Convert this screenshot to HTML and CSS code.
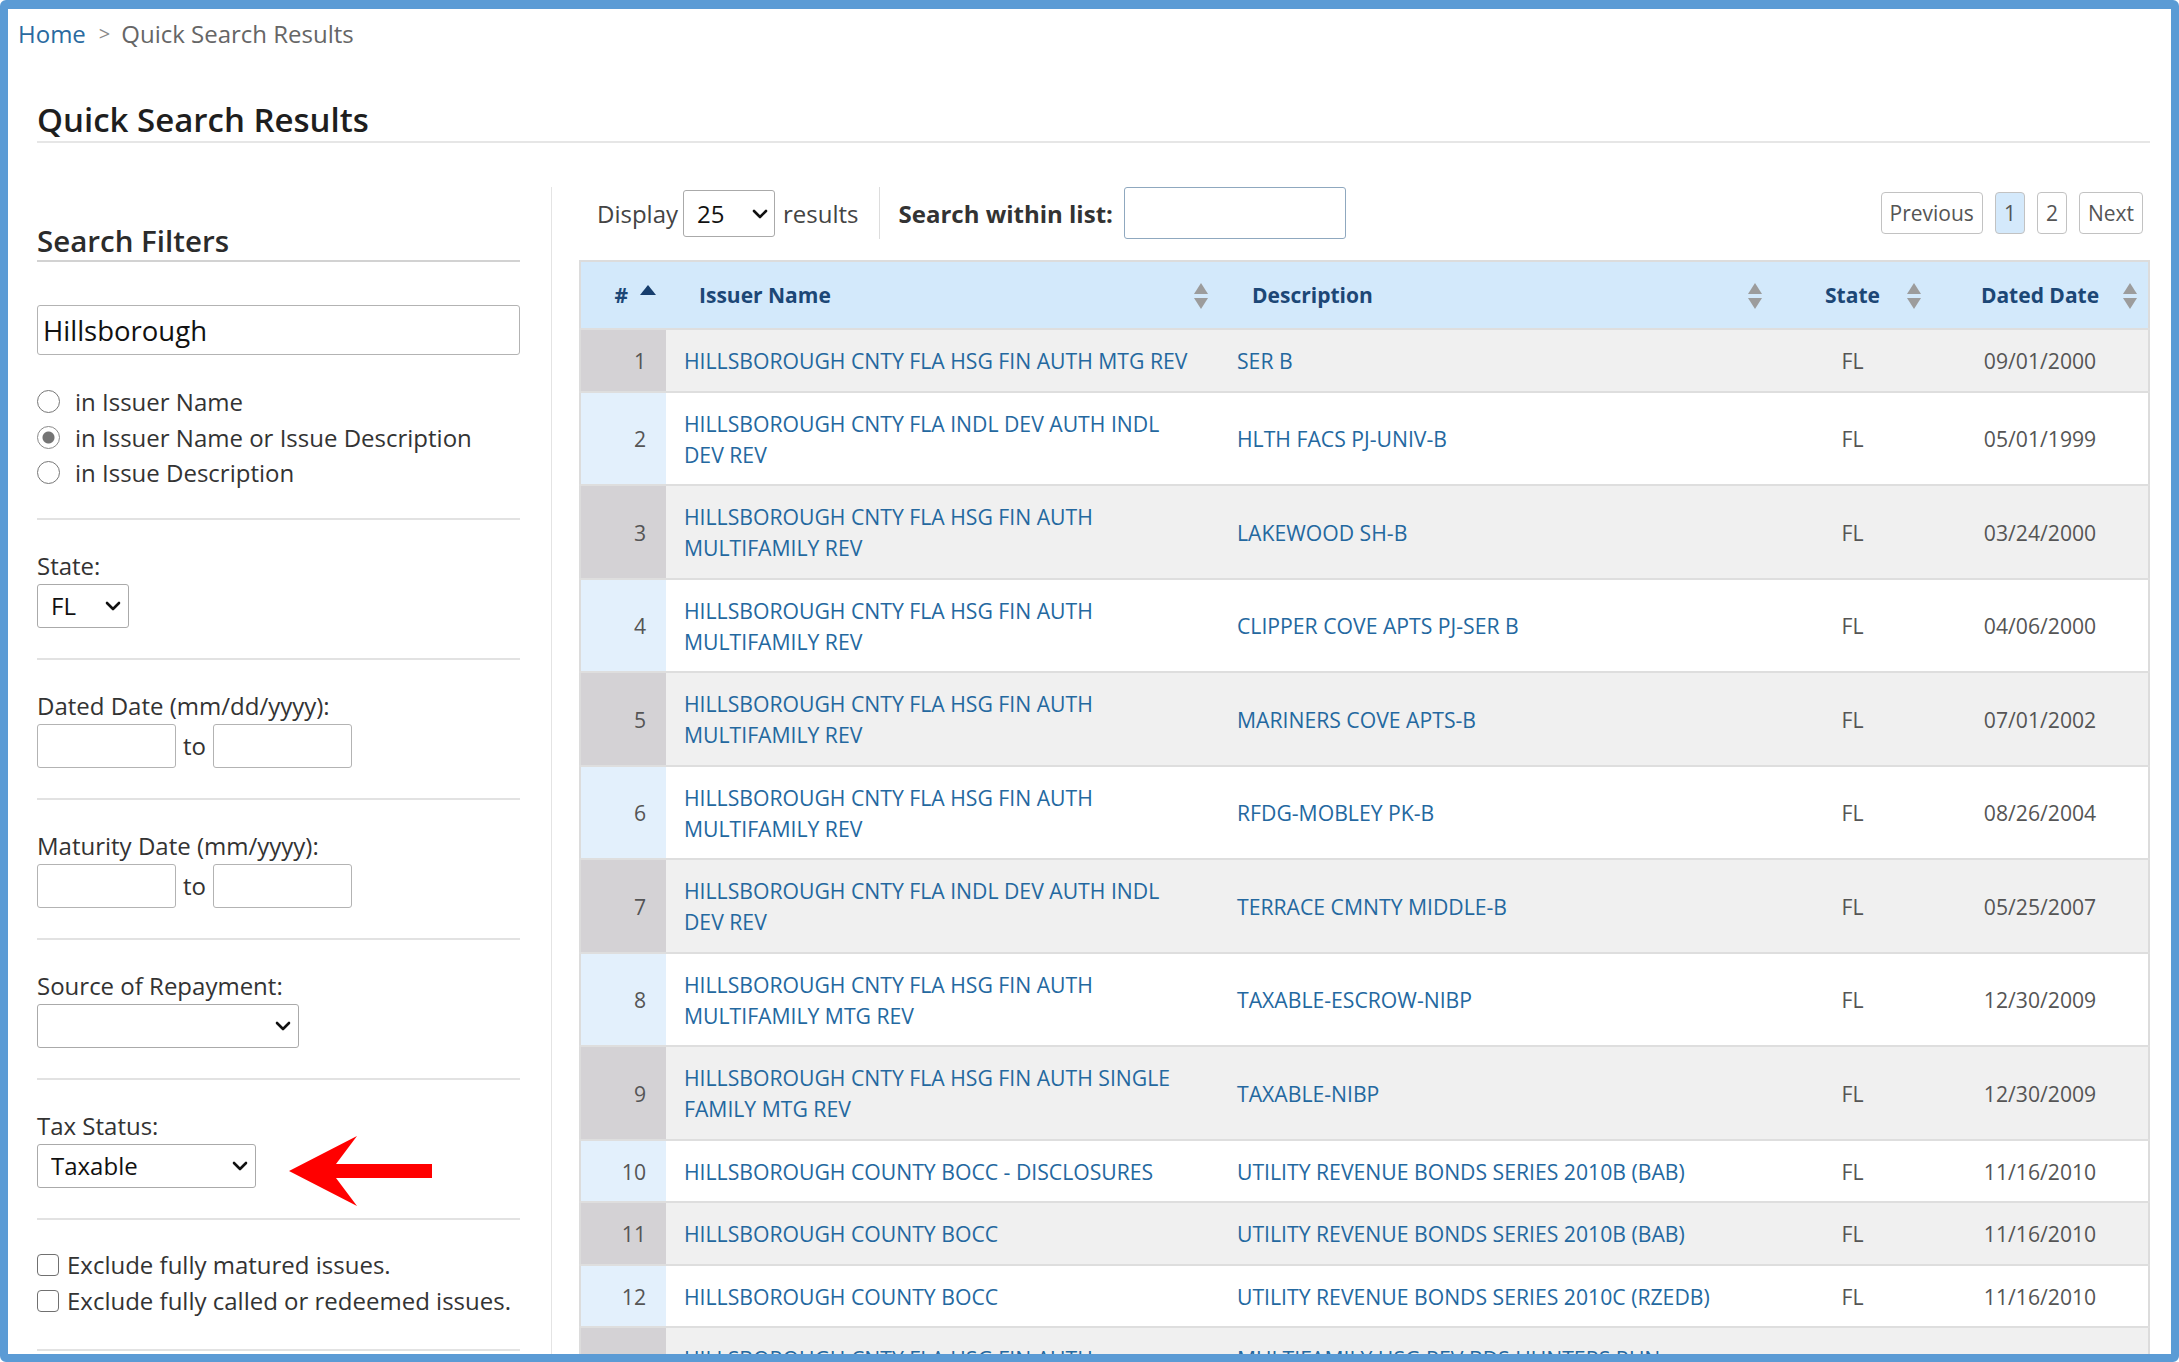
FILE: index.html
```html
<!DOCTYPE html>
<html lang="en">
<head>
<meta charset="utf-8">
<title>Quick Search Results</title>
<link rel="stylesheet" href="styles.css">
</head>
<body>
<div class="frame">
  <nav class="crumbs"><a class="crumb-link" href="#">Home</a><span class="crumb-sep">&gt;</span><span class="crumb-current">Quick Search Results</span></nav>
  <main class="page">
    <h1 class="title">Quick Search Results</h1>
    <div class="layout">
      <aside class="sidebar">
        <h2 class="side-title">Search Filters</h2>
        <div class="group group-first">
          <input class="text-input big" type="text" value="Hillsborough">
          <div class="radios">
            <label class="radio-line"><input type="radio" name="scope" class="radio"><span>in Issuer Name</span></label>
            <label class="radio-line"><input type="radio" name="scope" class="radio" checked><span>in Issuer Name or Issue Description</span></label>
            <label class="radio-line"><input type="radio" name="scope" class="radio"><span>in Issue Description</span></label>
          </div>
        </div>
        <div class="group">
          <label class="field-label">State:</label>
          <div class="sel sel-state"><select class="select"><option>FL</option></select><svg class="chev" viewBox="0 0 16 10" width="16" height="10"><polyline points="2,2 8,8 14,2"/></svg></div>
        </div>
        <div class="group">
          <label class="field-label">Dated Date (mm/dd/yyyy):</label>
          <div class="range"><input class="text-input date" type="text"><span class="to">to</span><input class="text-input date" type="text"></div>
        </div>
        <div class="group">
          <label class="field-label">Maturity Date (mm/yyyy):</label>
          <div class="range"><input class="text-input date" type="text"><span class="to">to</span><input class="text-input date" type="text"></div>
        </div>
        <div class="group">
          <label class="field-label">Source of Repayment:</label>
          <div class="sel sel-source"><select class="select"><option></option></select><svg class="chev" viewBox="0 0 16 10" width="16" height="10"><polyline points="2,2 8,8 14,2"/></svg></div>
        </div>
        <div class="group">
          <label class="field-label">Tax Status:</label>
          <div class="tax-row">
            <div class="sel sel-tax"><select class="select"><option>Taxable</option></select><svg class="chev" viewBox="0 0 16 10" width="16" height="10"><polyline points="2,2 8,8 14,2"/></svg></div>
            <svg class="arrow" viewBox="0 0 143 70" width="143" height="70"><polygon points="0,35 68,0 47,28 143,28 143,42 47,42 68,70"/></svg>
          </div>
        </div>
        <div class="group group-checks">
          <label class="check-line"><input type="checkbox" class="check"><span>Exclude fully matured issues.</span></label>
          <label class="check-line"><input type="checkbox" class="check"><span>Exclude fully called or redeemed issues.</span></label>
        </div>
        <div class="group"></div>
      </aside>
      <section class="results">
        <div class="toolbar">
          <span class="tb-text">Display</span>
          <div class="sel sel-count"><select class="select"><option>25</option></select><svg class="chev" viewBox="0 0 16 10" width="16" height="10"><polyline points="2,2 8,8 14,2"/></svg></div>
          <span class="tb-text">results</span>
          <span class="tb-sep"></span>
          <label class="tb-label">Search within list:</label>
          <input class="text-input within" type="text">
          <div class="pager">
            <span class="pg-btn">Previous</span>
            <span class="pg-btn pg-active">1</span>
            <span class="pg-btn">2</span>
            <span class="pg-btn">Next</span>
          </div>
        </div>
        <table class="grid">
          <colgroup>
            <col class="c-num"><col class="c-name"><col class="c-desc"><col class="c-state"><col class="c-date">
          </colgroup>
          <thead>
            <tr>
              <th class="th-num">#<svg class="asc" viewBox="0 0 16 10" width="16" height="10"><polygon points="8,0 16,10 0,10"/></svg></th>
              <th class="th-left">Issuer Name<svg class="sort" viewBox="0 0 14 26" width="14" height="26"><polygon points="7,0 14,11 0,11"/><polygon points="0,15 14,15 7,26"/></svg></th>
              <th class="th-left">Description<svg class="sort" viewBox="0 0 14 26" width="14" height="26"><polygon points="7,0 14,11 0,11"/><polygon points="0,15 14,15 7,26"/></svg></th>
              <th class="th-center">State<svg class="sort" viewBox="0 0 14 26" width="14" height="26"><polygon points="7,0 14,11 0,11"/><polygon points="0,15 14,15 7,26"/></svg></th>
              <th class="th-center">Dated Date<svg class="sort" viewBox="0 0 14 26" width="14" height="26"><polygon points="7,0 14,11 0,11"/><polygon points="0,15 14,15 7,26"/></svg></th>
            </tr>
          </thead>
          <tbody>
            <tr class="odd"><td class="num">1</td><td class="lnk">HILLSBOROUGH CNTY FLA HSG FIN AUTH MTG REV</td><td class="lnk">SER B</td><td class="ctr">FL</td><td class="ctr">09/01/2000</td></tr>
            <tr class="even"><td class="num">2</td><td class="lnk">HILLSBOROUGH CNTY FLA INDL DEV AUTH INDL DEV REV</td><td class="lnk">HLTH FACS PJ-UNIV-B</td><td class="ctr">FL</td><td class="ctr">05/01/1999</td></tr>
            <tr class="odd"><td class="num">3</td><td class="lnk">HILLSBOROUGH CNTY FLA HSG FIN AUTH MULTIFAMILY REV</td><td class="lnk">LAKEWOOD SH-B</td><td class="ctr">FL</td><td class="ctr">03/24/2000</td></tr>
            <tr class="even"><td class="num">4</td><td class="lnk">HILLSBOROUGH CNTY FLA HSG FIN AUTH MULTIFAMILY REV</td><td class="lnk">CLIPPER COVE APTS PJ-SER B</td><td class="ctr">FL</td><td class="ctr">04/06/2000</td></tr>
            <tr class="odd"><td class="num">5</td><td class="lnk">HILLSBOROUGH CNTY FLA HSG FIN AUTH MULTIFAMILY REV</td><td class="lnk">MARINERS COVE APTS-B</td><td class="ctr">FL</td><td class="ctr">07/01/2002</td></tr>
            <tr class="even"><td class="num">6</td><td class="lnk">HILLSBOROUGH CNTY FLA HSG FIN AUTH MULTIFAMILY REV</td><td class="lnk">RFDG-MOBLEY PK-B</td><td class="ctr">FL</td><td class="ctr">08/26/2004</td></tr>
            <tr class="odd"><td class="num">7</td><td class="lnk">HILLSBOROUGH CNTY FLA INDL DEV AUTH INDL DEV REV</td><td class="lnk">TERRACE CMNTY MIDDLE-B</td><td class="ctr">FL</td><td class="ctr">05/25/2007</td></tr>
            <tr class="even"><td class="num">8</td><td class="lnk">HILLSBOROUGH CNTY FLA HSG FIN AUTH MULTIFAMILY MTG REV</td><td class="lnk">TAXABLE-ESCROW-NIBP</td><td class="ctr">FL</td><td class="ctr">12/30/2009</td></tr>
            <tr class="odd"><td class="num">9</td><td class="lnk">HILLSBOROUGH CNTY FLA HSG FIN AUTH SINGLE FAMILY MTG REV</td><td class="lnk">TAXABLE-NIBP</td><td class="ctr">FL</td><td class="ctr">12/30/2009</td></tr>
            <tr class="even"><td class="num">10</td><td class="lnk">HILLSBOROUGH COUNTY BOCC - DISCLOSURES</td><td class="lnk">UTILITY REVENUE BONDS SERIES 2010B (BAB)</td><td class="ctr">FL</td><td class="ctr">11/16/2010</td></tr>
            <tr class="odd"><td class="num">11</td><td class="lnk">HILLSBOROUGH COUNTY BOCC</td><td class="lnk">UTILITY REVENUE BONDS SERIES 2010B (BAB)</td><td class="ctr">FL</td><td class="ctr">11/16/2010</td></tr>
            <tr class="even"><td class="num">12</td><td class="lnk">HILLSBOROUGH COUNTY BOCC</td><td class="lnk">UTILITY REVENUE BONDS SERIES 2010C (RZEDB)</td><td class="ctr">FL</td><td class="ctr">11/16/2010</td></tr>
            <tr class="odd"><td class="num">13</td><td class="lnk">HILLSBOROUGH CNTY FLA HSG FIN AUTH MULTIFAMILY REV</td><td class="lnk">MULTIFAMILY HSG REV BDS HUNTERS RUN PARTNERS</td><td class="ctr">FL</td><td class="ctr">12/01/2010</td></tr>
          </tbody>
        </table>
      </section>
    </div>
  </main>
</div>
</body>
</html>
```

FILE: styles.css
```css
* { box-sizing: border-box; }

html, body {
  margin: 0;
  padding: 0;
  background: #ffffff;
}

body {
  font-family: "Open Sans", "Noto Sans", "Liberation Sans", sans-serif;
  font-size: 24px;
  color: #333333;
}

.frame {
  width: 2179px;
  height: 1362px;
  border: 8px solid #5b9bd5;
  border-top-width: 9px;
  border-radius: 6px;
  overflow: hidden;
  background: #ffffff;
}

/* breadcrumb */
.crumbs {
  display: flex;
  align-items: center;
  height: 41px;
  padding: 8px 0 0 10px;
  font-size: 24px;
  color: #666666;
}
.crumb-link { color: #2a6aa0; text-decoration: none; }
.crumb-sep { color: #8a8a8a; margin: 0 11px 0 13px; font-size: 20px; }
.crumb-current { color: #666666; }

.page {
  padding: 0 21px 0 29px;
}

.title {
  margin: 49px 0 0 0;
  font-size: 33px;
  font-weight: 600;
  line-height: 42px;
  color: #1e1e1e;
  border-bottom: 2px solid #e6e6e6;
}

.layout {
  display: flex;
  margin-top: 44px;
}

/* sidebar */
.sidebar {
  width: 515px;
  flex: none;
  padding-right: 31px;
  border-right: 1px solid #e4e4e4;
}

.side-title {
  margin: 0;
  padding-top: 35px;
  font-size: 29.5px;
  font-weight: 600;
  line-height: 38px;
  color: #2b2b2b;
  border-bottom: 2px solid #d2d2d2;
}

.group {
  border-top: 2px solid #e2e2e2;
  padding: 28px 0 30px;
}
.group-first {
  border-top: none;
  padding: 43px 0 27px;
}
.group-checks {
  padding: 27px 0 30px;
}

.text-input {
  font-family: inherit;
  border: 1.5px solid #b3b3b3;
  border-radius: 3px;
  background: #ffffff;
  color: #111111;
  outline: none;
}
.big {
  width: 100%;
  height: 50px;
  font-size: 27.5px;
  padding: 0 5px;
}

.radios {
  margin-top: 29px;
}
.radio-line {
  display: flex;
  align-items: center;
  line-height: 35.5px;
  height: 35.5px;
  color: #333333;
}
.check-line {
  display: flex;
  align-items: center;
  line-height: 36px;
  height: 36px;
  color: #333333;
}
.radio {
  appearance: none;
  -webkit-appearance: none;
  width: 23px;
  height: 23px;
  margin: 0 15px 0 0;
  border: 1.5px solid #777777;
  border-radius: 50%;
  background: #ffffff;
  flex: none;
}
.radio:checked {
  border-color: #8a8a8a;
  background: radial-gradient(circle, #747474 0, #747474 5.5px, #ffffff 6.5px);
}
.check {
  appearance: none;
  -webkit-appearance: none;
  width: 22px;
  height: 22px;
  margin: 0 8px 0 0;
  border: 1.5px solid #707070;
  border-radius: 4px;
  background: #ffffff;
  flex: none;
}

.field-label {
  display: block;
  line-height: 36px;
  color: #333333;
}

.sel {
  position: relative;
  display: inline-block;
  vertical-align: middle;
}
.select {
  appearance: none;
  -webkit-appearance: none;
  font-family: inherit;
  font-size: 24px;
  color: #111111;
  height: 44px;
  padding: 0 34px 0 13px;
  border: 1.5px solid #aaaaaa;
  border-radius: 3px;
  background: #ffffff;
  display: block;
}
.chev {
  position: absolute;
  right: 8px;
  top: 17px;
  fill: none;
  stroke: #111111;
  stroke-width: 2.6;
  stroke-linecap: round;
  stroke-linejoin: round;
  pointer-events: none;
}
.sel-state .select { width: 92px; }
.sel-source .select { width: 262px; }
.sel-tax .select { width: 219px; }

.range {
  display: flex;
  align-items: center;
  gap: 7px;
}
.date {
  width: 139px;
  height: 44px;
}
.to { color: #333333; }

.tax-row {
  display: flex;
  align-items: flex-start;
  height: 44px;
}
.arrow {
  flex: none;
  margin: -8px 0 0 33px;
  fill: #ff0000;
}

/* results */
.results {
  flex: 1;
  min-width: 0;
  padding-left: 27px;
}

.toolbar {
  display: flex;
  align-items: center;
  height: 52px;
  padding-left: 18px;
}
.tb-text { color: #444444; }
.sel-count { margin: 0 8px 0 5px; }
.sel-count .select { width: 92px; height: 47px; padding-left: 13px; }
.sel-count .chev { top: 19px; right: 7px; }
.tb-sep {
  width: 1px;
  height: 52px;
  background: #dddddd;
  margin: 0 19px 0 20px;
}
.tb-label {
  font-weight: 700;
  color: #333333;
  margin-right: 11px;
}
.within {
  width: 222px;
  height: 52px;
  border-color: #8fa8bf;
  border-width: 1.5px;
}

.pager {
  margin-left: auto;
  margin-right: 7px;
  display: flex;
  gap: 12px;
}
.pg-btn {
  height: 42px;
  line-height: 40px;
  padding: 0 8px;
  border: 1px solid #c2c2c2;
  border-radius: 4px;
  font-size: 21px;
  color: #555555;
  background: #ffffff;
}
.pg-active { background: #d4e9fb; }

/* table */
.grid {
  width: 100%;
  margin-top: 21px;
  border-collapse: collapse;
  table-layout: fixed;
  font-size: 21.2px;
  border: 2px solid #dcdcdc;
}
.c-num { width: 86px; }
.c-name { width: 553px; }
.c-desc { width: 554px; }
.c-state { width: 159px; }
.c-date { width: auto; }

.grid th {
  position: relative;
  height: 68px;
  background: #d3e9fb;
  color: #1c4776;
  font-weight: 700;
  font-size: 21px;
  padding: 0;
  vertical-align: middle;
  white-space: nowrap;
}
.th-num {
  text-align: right;
  padding-right: 10px !important;
}
.asc {
  fill: #173e6d;
  margin-left: 12px;
  vertical-align: 8px;
}
.th-left {
  text-align: left;
  padding-left: 33px !important;
}
.th-center { text-align: center; }
.sort {
  position: absolute;
  right: 11px;
  top: 21px;
  fill: #9c9c9c;
}

.grid td {
  border-top: 2px solid #dedede;
  padding: 15px 0 14.5px;
  line-height: 31px;
  vertical-align: middle;
}
.num {
  text-align: right;
  padding-right: 20px !important;
  color: #555555;
}
.lnk {
  color: #24689f;
  padding-left: 18px !important;
  padding-right: 24px !important;
}
.ctr {
  text-align: center;
  color: #555555;
}

.odd td { background: #f0f0f0; }
.odd .num { background: #d4d2d5; }
.even td { background: #ffffff; }
.even .num { background: #e3f0fc; }
```
